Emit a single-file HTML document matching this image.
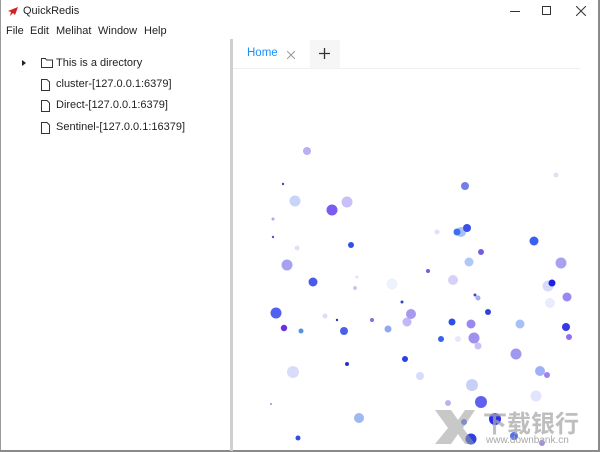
<!DOCTYPE html>
<html><head><meta charset="utf-8"><style>
*{margin:0;padding:0;box-sizing:border-box}
body{width:600px;height:452px;overflow:hidden;background:#fff;font-family:"Liberation Sans","Noto Sans CJK SC",sans-serif;font-size:11px;color:#222;position:relative}
.a{position:absolute;white-space:nowrap}
</style></head><body>
<div class="a" style="left:0;top:0;width:1px;height:452px;background:#9a9a9a"></div>
<div class="a" style="left:598px;top:0;width:2px;height:452px;background:#8a8a8a"></div>
<div class="a" style="left:0;top:450px;width:600px;height:2px;background:#8a8a8a"></div>
<svg class="a" style="left:7px;top:6px" width="12" height="12" viewBox="0 0 12 12"><path d="M11 1 L1 5 L4 6 L3 10 L6 7 L8 9 Z" fill="#d42020"/></svg>
<div class="a" style="left:23px;top:5px">QuickRedis</div>
<div class="a" style="left:510px;top:11px;width:10px;height:1px;background:#333"></div>
<div class="a" style="left:542px;top:6px;width:9px;height:9px;border:1px solid #333"></div>
<svg class="a" style="left:576px;top:6px" width="10" height="10"><path d="M0 0L10 10M10 0L0 10" stroke="#333" stroke-width="1"/></svg>
<div class="a" style="left:6px;top:25px">File</div>
<div class="a" style="left:30px;top:25px">Edit</div>
<div class="a" style="left:56px;top:25px">Melihat</div>
<div class="a" style="left:98px;top:25px">Window</div>
<div class="a" style="left:144px;top:25px">Help</div>
<svg class="a" style="left:22px;top:60px" width="5" height="6"><path d="M0 0L4 3L0 6Z" fill="#222"/></svg>
<svg class="a" style="left:41px;top:58px" width="12" height="10"><path d="M0.5 0.5H4.5L5.5 2H11.5V9.5H0.5Z" fill="none" stroke="#333"/></svg>
<div class="a" style="left:56px;top:57px">This is a directory</div>
<svg class="a" style="left:41px;top:79px" width="9" height="12"><path d="M0.5 0.5H6L8.5 3V11.5H0.5Z" fill="none" stroke="#333"/></svg>
<div class="a" style="left:56px;top:78px">cluster-[127.0.0.1:6379]</div>
<svg class="a" style="left:41px;top:100px" width="9" height="12"><path d="M0.5 0.5H6L8.5 3V11.5H0.5Z" fill="none" stroke="#333"/></svg>
<div class="a" style="left:56px;top:99px">Direct-[127.0.0.1:6379]</div>
<svg class="a" style="left:41px;top:122px" width="9" height="12"><path d="M0.5 0.5H6L8.5 3V11.5H0.5Z" fill="none" stroke="#333"/></svg>
<div class="a" style="left:56px;top:121px">Sentinel-[127.0.0.1:16379]</div>
<div class="a" style="left:230px;top:39px;width:3px;height:412px;background:#cfcfcf"></div>
<div class="a" style="left:233px;top:68px;width:347px;height:1px;background:#f0f0f0"></div>
<div class="a" style="left:310px;top:40px;width:30px;height:28px;background:#f6f6f6"></div>
<div class="a" style="left:247px;top:47px;color:#1890ff;font-size:11.5px">Home</div>
<svg class="a" style="left:287px;top:51px" width="8" height="8"><path d="M0 0L8 8M8 0L0 8" stroke="#999"/></svg>
<svg class="a" style="left:319px;top:48px" width="11" height="11"><path d="M5.5 0V11M0 5.5H11" stroke="#333" stroke-width="1.3"/></svg>
<svg class="a" style="left:0;top:0" width="600" height="452">
<g>
<circle cx="307" cy="151" r="4" fill="#b8b0f0"/><circle cx="295" cy="201" r="5.5" fill="#c8d4f8"/><circle cx="332" cy="210" r="5.5" fill="#7b5cf0"/><circle cx="347" cy="202" r="5.5" fill="#c8c0f8"/><circle cx="465" cy="186" r="4" fill="#7080e8"/><circle cx="461" cy="232" r="5" fill="#a8c0f8"/><circle cx="467" cy="228" r="4" fill="#3a50e8"/><circle cx="457" cy="232" r="3.5" fill="#3a70f0"/><circle cx="534" cy="241" r="4.5" fill="#3a60f0"/><circle cx="351" cy="245" r="3" fill="#3050f0"/><circle cx="287" cy="265" r="5.5" fill="#a8a0f0"/><circle cx="481" cy="252" r="3" fill="#7060e0"/><circle cx="469" cy="262" r="4.5" fill="#b0c8f8"/><circle cx="561" cy="263" r="5.5" fill="#a8a0f0"/><circle cx="313" cy="282" r="4.5" fill="#4a5ae8"/><circle cx="392" cy="284" r="5.5" fill="#eef2fc"/><circle cx="453" cy="280" r="5" fill="#d8d0f8"/><circle cx="548" cy="286" r="5.5" fill="#d8dcf8"/><circle cx="552" cy="283" r="3.5" fill="#1a20e8"/><circle cx="567" cy="297" r="4.5" fill="#9888f0"/><circle cx="550" cy="303" r="5" fill="#e8ecfc"/><circle cx="276" cy="313" r="5.5" fill="#5060f0"/><circle cx="284" cy="328" r="3.2" fill="#6a30e0"/><circle cx="301" cy="331" r="2.5" fill="#5890e0"/><circle cx="344" cy="331" r="4" fill="#4a60e8"/><circle cx="388" cy="329" r="3.5" fill="#90a8f0"/><circle cx="407" cy="322" r="4.5" fill="#c0b8f8"/><circle cx="411" cy="314" r="5" fill="#a898f0"/><circle cx="452" cy="322" r="3.5" fill="#2a50e8"/><circle cx="471" cy="324" r="4.5" fill="#9888f0"/><circle cx="488" cy="312" r="3" fill="#3040e0"/><circle cx="520" cy="324" r="4.5" fill="#a8c0f8"/><circle cx="566" cy="327" r="4" fill="#3838e8"/><circle cx="569" cy="337" r="3" fill="#9070f0"/><circle cx="441" cy="339" r="3" fill="#3a60f0"/><circle cx="458" cy="339" r="3" fill="#e8e8fc"/><circle cx="474" cy="338" r="5.5" fill="#a090f0"/><circle cx="478" cy="346" r="3.5" fill="#c8c0f8"/><circle cx="516" cy="354" r="5.5" fill="#a098f0"/><circle cx="405" cy="359" r="3" fill="#2a40e8"/><circle cx="347" cy="364" r="2" fill="#3030c0"/>
<circle cx="540" cy="371" r="5" fill="#a0b0f8"/><circle cx="547" cy="375" r="3" fill="#a080f0"/><circle cx="420" cy="376" r="4" fill="#d8dcfa"/><circle cx="472" cy="385" r="6" fill="#c8d0f8"/><circle cx="536" cy="396" r="5.5" fill="#e0e4fc"/><circle cx="481" cy="402" r="6" fill="#6060f0"/><circle cx="448" cy="403" r="3" fill="#c0b0f0"/><circle cx="495" cy="419" r="6" fill="#2a2af0"/><circle cx="471" cy="439" r="5.5" fill="#3040e0"/><circle cx="514" cy="436" r="4" fill="#5070f0"/><circle cx="542" cy="443" r="3" fill="#a888f0"/>
<circle cx="293" cy="372" r="6" fill="#d8dcfa"/><circle cx="359" cy="418" r="5" fill="#a0b8f0"/><circle cx="298" cy="438" r="2.5" fill="#3050e0"/><circle cx="464" cy="422" r="3" fill="#6080f0"/><circle cx="556" cy="175" r="2.5" fill="#e0e0f0"/><circle cx="283" cy="184" r="1.2" fill="#5040c0"/><circle cx="273" cy="219" r="1.5" fill="#b0a8f0"/><circle cx="273" cy="237" r="1.2" fill="#6050d0"/><circle cx="297" cy="248" r="2.5" fill="#e0e0f8"/><circle cx="428" cy="271" r="2" fill="#7060e0"/><circle cx="437" cy="232" r="2.5" fill="#e0e0f8"/><circle cx="402" cy="302" r="1.5" fill="#3040d0"/><circle cx="355" cy="288" r="2" fill="#c8c8f0"/><circle cx="325" cy="316" r="2.5" fill="#e0dcf8"/><circle cx="337" cy="320" r="1.2" fill="#3030c0"/><circle cx="357" cy="277" r="1.5" fill="#e0e0f8"/><circle cx="475" cy="295" r="1.5" fill="#5040d0"/><circle cx="478" cy="298" r="2.5" fill="#a0b0f0"/><circle cx="372" cy="320" r="2" fill="#8070e0"/><circle cx="271" cy="404" r="1" fill="#9090e0"/>
</g>
<g opacity="0.55" fill="#9a9a9a"><path d="M435 410H451L458 420L465 410H475L463 428L475 444H465L458 434L451 444H435L448 428Z"/></g>
<text x="483" y="432" font-family="Noto Sans CJK SC,sans-serif" font-size="24" font-weight="bold" fill="#a8a8a8" fill-opacity="0.75">下载银行</text>
<text x="486" y="443" font-family="Liberation Sans,sans-serif" font-size="10" fill="#a8a8a8">www.downbank.cn</text>
</svg>
</body></html>
